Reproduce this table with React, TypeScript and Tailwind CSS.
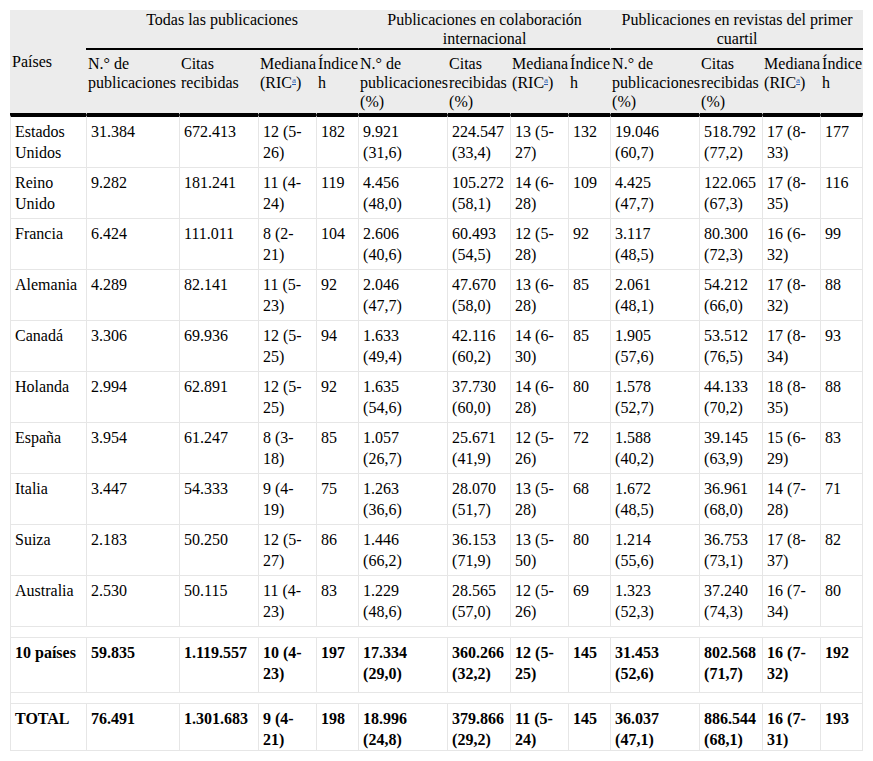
import { Fragment } from "react";

const widths = [76, 93, 79, 58, 42, 89, 63, 58, 42, 89, 63, 58, 43];

const rows: string[][] = [
  ["Estados Unidos", "31.384", "672.413", "12 (5-26)", "182", "9.921 (31,6)", "224.547 (33,4)", "13 (5-27)", "132", "19.046 (60,7)", "518.792 (77,2)", "17 (8-33)", "177"],
  ["Reino Unido", "9.282", "181.241", "11 (4-24)", "119", "4.456 (48,0)", "105.272 (58,1)", "14 (6-28)", "109", "4.425 (47,7)", "122.065 (67,3)", "17 (8-35)", "116"],
  ["Francia", "6.424", "111.011", "8 (2-21)", "104", "2.606 (40,6)", "60.493 (54,5)", "12 (5-28)", "92", "3.117 (48,5)", "80.300 (72,3)", "16 (6-32)", "99"],
  ["Alemania", "4.289", "82.141", "11 (5-23)", "92", "2.046 (47,7)", "47.670 (58,0)", "13 (6-28)", "85", "2.061 (48,1)", "54.212 (66,0)", "17 (8-32)", "88"],
  ["Canadá", "3.306", "69.936", "12 (5-25)", "94", "1.633 (49,4)", "42.116 (60,2)", "14 (6-30)", "85", "1.905 (57,6)", "53.512 (76,5)", "17 (8-34)", "93"],
  ["Holanda", "2.994", "62.891", "12 (5-25)", "92", "1.635 (54,6)", "37.730 (60,0)", "14 (6-28)", "80", "1.578 (52,7)", "44.133 (70,2)", "18 (8-35)", "88"],
  ["España", "3.954", "61.247", "8 (3-18)", "85", "1.057 (26,7)", "25.671 (41,9)", "12 (5-26)", "72", "1.588 (40,2)", "39.145 (63,9)", "15 (6-29)", "83"],
  ["Italia", "3.447", "54.333", "9 (4-19)", "75", "1.263 (36,6)", "28.070 (51,7)", "13 (5-28)", "68", "1.672 (48,5)", "36.961 (68,0)", "14 (7-28)", "71"],
  ["Suiza", "2.183", "50.250", "12 (5-27)", "86", "1.446 (66,2)", "36.153 (71,9)", "13 (5-50)", "80", "1.214 (55,6)", "36.753 (73,1)", "17 (8-37)", "82"],
  ["Australia", "2.530", "50.115", "11 (4-23)", "83", "1.229 (48,6)", "28.565 (57,0)", "12 (5-26)", "69", "1.323 (52,3)", "37.240 (74,3)", "16 (7-34)", "80"],
];

const tenRow = ["10 países", "59.835", "1.119.557", "10 (4-23)", "197", "17.334 (29,0)", "360.266 (32,2)", "12 (5-25)", "145", "31.453 (52,6)", "802.568 (71,7)", "16 (7-32)", "192"];
const totalRow = ["TOTAL", "76.491", "1.301.683", "9 (4-21)", "198", "18.996 (24,8)", "379.866 (29,2)", "11 (5-24)", "145", "36.037 (47,1)", "886.544 (68,1)", "16 (7-31)", "193"];

// numbers break before the percentage, medians after the hyphen
function lines(v: string, i: number): string[] {
  if (i === 0) return [v];
  const dash = v.indexOf("-");
  if (dash >= 0) return [v.slice(0, dash + 1), v.slice(dash + 1)];
  const sp = v.indexOf(" (");
  if (sp >= 0) return [v.slice(0, sp), v.slice(sp + 1)];
  return [v];
}

function Ric() {
  return (
    <>
      (RIC<span className="relative top-[-5px] text-[9px] leading-none text-[#2a5db0] underline">a</span>)
    </>
  );
}

const subTh = "border-b-2 border-b-black border-l border-l-[#ececec] px-[1px] pt-[4px] pb-[2px] text-left align-top font-normal";

function SubHeads({ pct }: { pct?: boolean }) {
  return (
    <>
      <th className={subTh}>
        N.° de<br />publicaciones
        {pct && (
          <>
            <br />(%)
          </>
        )}
      </th>
      <th className={subTh}>
        Citas<br />recibidas
        {pct && (
          <>
            <br />(%)
          </>
        )}
      </th>
      <th className={subTh}>
        Mediana<br /><Ric />
      </th>
      <th className={subTh}>
        Índice<br />h
      </th>
    </>
  );
}

function BodyRow({ cells, first, bold, pad }: { cells: string[]; first?: boolean; bold?: boolean; pad: string }) {
  return (
    <tr className={bold ? "font-bold" : ""}>
      {cells.map((c, i) => (
        <td
          key={i}
          className={`border-l border-b border-[#e6e6e6] px-[4px] pt-[4px] ${pad} align-top text-left ${
            i === 12 ? "border-r" : ""
          } ${first ? "border-t-2 border-t-black" : ""}`}
        >
          {lines(c, i).map((l, j) => (
            <Fragment key={j}>
              {j > 0 && <br />}
              {l}
            </Fragment>
          ))}
        </td>
      ))}
    </tr>
  );
}

function Spacer() {
  return (
    <tr>
      <td colSpan={13} className="h-[11px] border-l border-r border-b border-[#e6e6e6] p-0" />
    </tr>
  );
}

export default function App() {
  return (
    <div className="min-h-screen bg-white p-[10px] text-black" style={{ fontFamily: '"Liberation Serif", "Times New Roman", serif' }}>
      <table className="w-[853px] table-fixed border-separate border-spacing-0 text-[16px]">
        <colgroup>
          {widths.map((w, i) => (
            <col key={i} style={{ width: w }} />
          ))}
        </colgroup>
        <thead className="bg-[#ececec] leading-[19px]">
          <tr>
            <th rowSpan={2} className="border-b-2 border-b-black pl-[2px] text-left align-middle font-normal">
              Países
            </th>
            <th colSpan={4} className="h-[40px] border-b-2 border-b-black px-[1px] text-center align-top font-normal">
              Todas las publicaciones
            </th>
            <th colSpan={4} className="border-b-2 border-b-black border-l border-l-[#ececec] px-[1px] text-center align-top font-normal">
              Publicaciones en colaboración internacional
            </th>
            <th colSpan={4} className="border-b-2 border-b-black border-l border-l-[#ececec] px-[1px] text-center align-top font-normal">
              Publicaciones en revistas del primer cuartil
            </th>
          </tr>
          <tr>
            <SubHeads />
            <SubHeads pct />
            <SubHeads pct />
          </tr>
        </thead>
        <tbody className="leading-[21px]">
          {rows.map((r, i) => (
            <BodyRow key={r[0]} cells={r} first={i === 0} pad="pb-[4px]" />
          ))}
          <Spacer />
          <BodyRow cells={tenRow} bold pad="pb-[8px]" />
          <Spacer />
          <BodyRow cells={totalRow} bold pad="pb-0" />
        </tbody>
      </table>
    </div>
  );
}
